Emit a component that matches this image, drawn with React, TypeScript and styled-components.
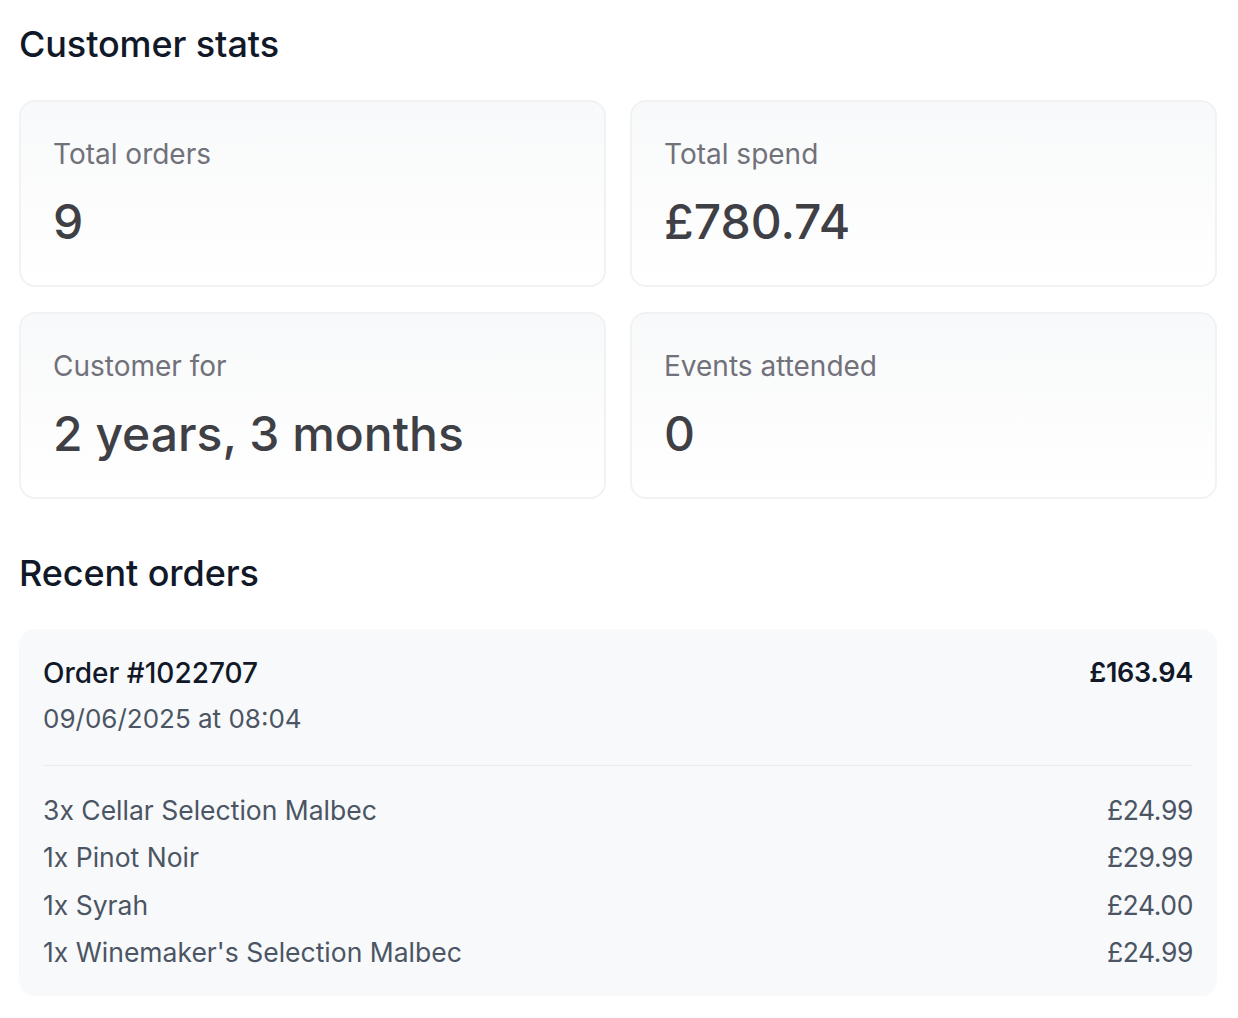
import React from 'react';
import styled, { createGlobalStyle } from 'styled-components';

const GlobalStyle = createGlobalStyle`
  * {
    box-sizing: border-box;
  }

  body {
    margin: 0;
    background: #ffffff;
    font-family: Inter, "Noto Sans", "Liberation Sans", sans-serif;
    -webkit-font-smoothing: antialiased;
  }
`;

const Page = styled.div`
  width: 1198px;
  margin-left: 19px;
  padding-top: 16px;
  padding-bottom: 23px;
`;

const Section = styled.section`
  & + & {
    margin-top: 46px;
  }
`;

const Heading = styled.h2`
  margin: 0 0 28px;
  font-size: 36px;
  line-height: 56px;
  font-weight: 500;
  color: #111827;
  letter-spacing: -0.1px;
`;

const StatGrid = styled.div`
  display: grid;
  grid-template-columns: 1fr 1fr;
  gap: 25px 24px;
`;

const StatCard = styled.div`
  border: 2px solid #f1f2f4;
  border-radius: 16px;
  padding: 32px 32px 31px;
  background: linear-gradient(180deg, #f8f9fa 0%, #ffffff 100%);
  display: flex;
  flex-direction: column;
  gap: 16px;
`;

const StatLabel = styled.div`
  font-size: 28px;
  line-height: 40px;
  color: #71717a;
`;

const StatValue = styled.div`
  font-size: 48px;
  line-height: 64px;
  font-weight: 500;
  color: #3f3f46;
`;

const OrderCard = styled.div`
  background: #f8f9fb;
  border-radius: 16px;
  padding: 24px;
`;

const OrderHead = styled.div`
  display: flex;
  justify-content: space-between;
  align-items: flex-start;
  padding-bottom: 26px;
  border-bottom: 1px solid #eaecef;
`;

const OrderTitle = styled.div`
  font-size: 28px;
  line-height: 40px;
  font-weight: 500;
  color: #111827;
`;

const OrderDate = styled.div`
  margin-top: 6px;
  font-size: 26px;
  line-height: 40px;
  color: #4b5563;
`;

const OrderTotal = styled.div`
  font-size: 27px;
  line-height: 40px;
  font-weight: 600;
  color: #111827;
  letter-spacing: -0.3px;
`;

const ItemList = styled.ul`
  list-style: none;
  margin: 0;
  padding: 24px 0 0;
  display: flex;
  flex-direction: column;
  gap: 7.3px;
`;

const Item = styled.li`
  display: flex;
  justify-content: space-between;
  font-size: 26.5px;
  line-height: 40px;
  color: #4b5563;
`;

const Price = styled.span`
  letter-spacing: -0.4px;
`;

const stats = [
  { label: 'Total orders', value: '9' },
  { label: 'Total spend', value: '£780.74' },
  { label: 'Customer for', value: '2 years, 3 months' },
  { label: 'Events attended', value: '0' },
];

const items = [
  { qty: 3, name: 'Cellar Selection Malbec', price: '£24.99' },
  { qty: 1, name: 'Pinot Noir', price: '£29.99' },
  { qty: 1, name: 'Syrah', price: '£24.00' },
  { qty: 1, name: "Winemaker's Selection Malbec", price: '£24.99' },
];

export default function App() {
  return (
    <>
      <GlobalStyle />
      <Page>
        <Section>
          <Heading>Customer stats</Heading>
          <StatGrid>
            {stats.map((s) => (
              <StatCard key={s.label}>
                <StatLabel>{s.label}</StatLabel>
                <StatValue>{s.value}</StatValue>
              </StatCard>
            ))}
          </StatGrid>
        </Section>

        <Section>
          <Heading>Recent orders</Heading>
          <OrderCard>
            <OrderHead>
              <div>
                <OrderTitle>Order #1022707</OrderTitle>
                <OrderDate>09/06/2025 at 08:04</OrderDate>
              </div>
              <OrderTotal>£163.94</OrderTotal>
            </OrderHead>
            <ItemList>
              {items.map((it) => (
                <Item key={it.name}>
                  <span>
                    {it.qty}x {it.name}
                  </span>
                  <Price>{it.price}</Price>
                </Item>
              ))}
            </ItemList>
          </OrderCard>
        </Section>
      </Page>
    </>
  );
}
